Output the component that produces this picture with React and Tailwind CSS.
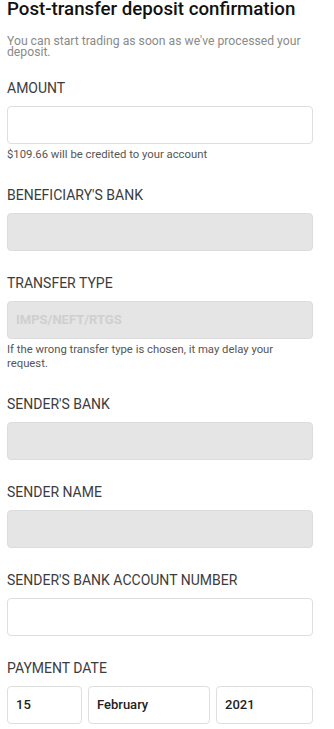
import React from "react";

const font = { fontFamily: "Roboto, 'Liberation Sans', sans-serif" };

function Label({ children }) {
  return <div className="text-[14px] leading-[16px] text-[#3c3c3c]">{children}</div>;
}

function Box({ gray, children, className = "" }) {
  return (
    <div
      className={
        "h-[38px] rounded-[4px] border flex items-center px-[8px] text-[13px] font-medium " +
        (gray ? "bg-[#e5e5e5] border-[#dcdcdc] " : "bg-white border-[#dedede] ") +
        className
      }
    >
      {children}
    </div>
  );
}

function Help({ children }) {
  return <div className="mt-[4px] text-[11.3px] leading-[14.5px] text-[#555]">{children}</div>;
}

function Field({ label, gray, children, help }) {
  return (
    <div className="mb-[24px]">
      <Label>{label}</Label>
      <div className="mt-[10px]">
        <Box gray={gray}>{children}</Box>
      </div>
      {help && <Help>{help}</Help>}
    </div>
  );
}

export default function App() {
  return (
    <div className="bg-white w-[334px] h-[729px] overflow-hidden pl-[7px] pr-[21px]" style={font}>
      <h1 className="text-[18.7px] leading-[16px] font-medium text-[#111] whitespace-nowrap pt-[1px]">
        Post-transfer deposit confirmation
      </h1>
      <p className="mt-[19px] text-[12.2px] leading-[11px] text-[#8a8a8a]">
        You can start trading as soon as we've processed your deposit.
      </p>
      <div className="mt-[22px]">
        <Field label="AMOUNT" help="$109.66 will be credited to your account" />
        <Field label="BENEFICIARY'S BANK" gray />
        <Field
          label="TRANSFER TYPE"
          gray
          help="If the wrong transfer type is chosen, it may delay your request."
        >
          <span className="font-bold text-[#cfcfcf]">IMPS/NEFT/RTGS</span>
        </Field>
        <Field label="SENDER'S BANK" gray />
        <Field label="SENDER NAME" gray />
        <Field label="SENDER'S BANK ACCOUNT NUMBER" />
        <div>
          <Label>PAYMENT DATE</Label>
          <div className="mt-[10px] flex gap-[6px] text-[#222]">
            <Box className="w-[75px]">15</Box>
            <Box className="w-[122px]">February</Box>
            <Box className="flex-1">2021</Box>
          </div>
        </div>
      </div>
    </div>
  );
}
